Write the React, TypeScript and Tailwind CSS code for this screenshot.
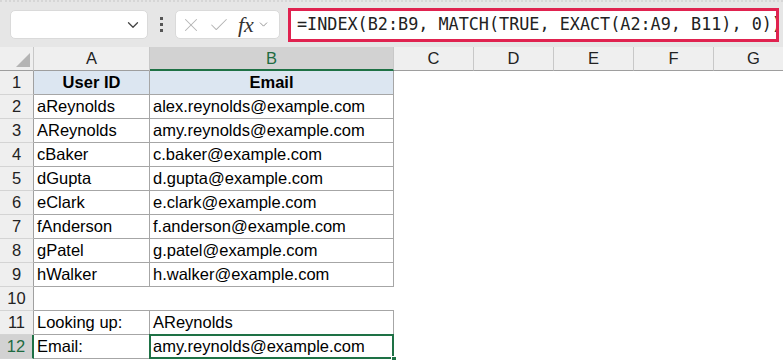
import { X, Check, ChevronDown } from "lucide-react";

const rows: [string, string][] = [
  ["aReynolds", "alex.reynolds@example.com"],
  ["AReynolds", "amy.reynolds@example.com"],
  ["cBaker", "c.baker@example.com"],
  ["dGupta", "d.gupta@example.com"],
  ["eClark", "e.clark@example.com"],
  ["fAnderson", "f.anderson@example.com"],
  ["gPatel", "g.patel@example.com"],
  ["hWalker", "h.walker@example.com"],
];

function RowNum({ n, active }: { n: number; active?: boolean }) {
  return (
    <div
      className={
        active
          ? "w-[34px] h-[24px] shrink-0 flex items-center justify-center bg-[#d2d2d2] text-[#1e6b41] border-b border-[#d4d4d4] border-r-2 border-r-[#1e7145]"
          : "w-[34px] h-[24px] shrink-0 flex items-center justify-center bg-[#efefef] text-[#222] border-b border-[#d4d4d4] border-r border-r-[#a0a0a0]"
      }
    >
      {n}
    </div>
  );
}

export default function App() {
  return (
    <div
      className="w-[783px] h-[360px] overflow-hidden bg-white text-[16.5px] text-black"
      style={{ fontFamily: "'Liberation Sans', Arial, sans-serif" }}
    >
      {/* Formula bar */}
      <div className="h-[47px] bg-[#e6e6e6] border-t-2 border-dotted border-[#d6d6d6] flex items-center">
        <div className="ml-[10px] w-[138px] h-[29px] bg-white rounded-[5px] border border-[#dadada] flex items-center justify-end pr-[5px]">
          <ChevronDown className="w-[18px] h-[18px] text-[#444]" strokeWidth={1.7} />
        </div>
        <div className="w-[27px] flex flex-col items-center gap-[3px]">
          <span className="w-[3px] h-[3px] bg-[#555]" />
          <span className="w-[3px] h-[3px] bg-[#555]" />
          <span className="w-[3px] h-[3px] bg-[#555]" />
        </div>
        <div className="w-[105px] h-[29px] bg-white rounded-[5px] border border-[#dadada] flex items-center pl-[4px]">
          <X className="w-[22px] h-[22px] text-[#b4b4b4]" strokeWidth={1.1} />
          <Check className="w-[22px] h-[22px] ml-[6px] text-[#b4b4b4]" strokeWidth={1.1} />
          <span
            className="ml-[8px] italic text-[22px] text-[#333] leading-none"
            style={{ fontFamily: "'Liberation Serif', 'Times New Roman', serif" }}
          >
            fx
          </span>
          <ChevronDown className="w-[13px] h-[13px] ml-[3px] text-[#888]" strokeWidth={1.6} />
        </div>
        <div className="ml-[8px] w-[491px] h-[34px] border-[3px] border-[#e0224f] bg-white flex items-center pl-[6px] overflow-hidden whitespace-nowrap">
          <span
            className="text-[16.8px] text-[#222]"
            style={{ fontFamily: "'DejaVu Sans Mono', 'Liberation Mono', monospace" }}
          >
            =INDEX(B2:B9, MATCH(TRUE, EXACT(A2:A9, B11), 0))
          </span>
        </div>
      </div>

      {/* Column headers */}
      <div className="flex h-[24px] bg-[#efefef]">
        <div className="w-[34px] shrink-0 border-b border-[#9e9e9e] border-r border-r-[#c8c8c8] relative">
          <div
            className="absolute right-[3px] bottom-[3px] w-[14px] h-[14px] bg-[#b4b4b4]"
            style={{ clipPath: "polygon(100% 0, 100% 100%, 0 100%)" }}
          />
        </div>
        <div className="w-[116px] shrink-0 flex items-center justify-center border-b border-[#9e9e9e] border-r border-r-[#c8c8c8] text-[#222]">
          A
        </div>
        <div className="w-[244px] shrink-0 flex items-center justify-center bg-[#d2d2d2] border-b-2 border-[#1e7145] border-r border-r-[#c8c8c8] text-[#1e6b41]">
          B
        </div>
        {["C", "D", "E", "F", "G"].map((c) => (
          <div
            key={c}
            className="w-[80px] shrink-0 flex items-center justify-center border-b border-[#9e9e9e] border-r border-r-[#c8c8c8] text-[#222]"
          >
            {c}
          </div>
        ))}
      </div>

      {/* Row 1 */}
      <div className="flex h-[24px]">
        <RowNum n={1} />
        <div className="w-[116px] shrink-0 flex items-center justify-center bg-[#dce6f1] font-bold border-b border-r border-[#a6a6a6]">
          User ID
        </div>
        <div className="w-[244px] shrink-0 flex items-center justify-center bg-[#dce6f1] font-bold border-b border-r border-[#a6a6a6]">
          Email
        </div>
      </div>

      {rows.map(([id, email], i) => (
        <div key={id} className="flex h-[24px]">
          <RowNum n={i + 2} />
          <div className="w-[116px] shrink-0 flex items-center pl-[3px] border-b border-r border-[#a6a6a6]">
            {id}
          </div>
          <div className="w-[244px] shrink-0 flex items-center pl-[3px] border-b border-r border-[#a6a6a6]">
            {email}
          </div>
        </div>
      ))}

      {/* Row 10 */}
      <div className="flex h-[24px]">
        <RowNum n={10} />
        <div className="w-[360px] shrink-0 border-b border-[#a6a6a6]" />
      </div>

      {/* Row 11 */}
      <div className="flex h-[24px]">
        <RowNum n={11} />
        <div className="w-[116px] shrink-0 flex items-center pl-[3px] border-b border-r border-[#a6a6a6]">
          Looking up:
        </div>
        <div className="w-[244px] shrink-0 flex items-center pl-[3px] border-b border-r border-[#a6a6a6]">
          AReynolds
        </div>
      </div>

      {/* Row 12 */}
      <div className="flex h-[24px]">
        <RowNum n={12} active />
        <div className="w-[116px] shrink-0 flex items-center pl-[3px] border-b border-r border-[#a6a6a6]">
          Email:
        </div>
        <div className="w-[244px] shrink-0 flex items-center pl-[3px] border-b border-r border-[#a6a6a6] relative">
          amy.reynolds@example.com
          <div className="absolute -left-[1px] -top-[1px] -right-[1px] -bottom-[1px] border-2 border-[#1e7145]" />
          <div className="absolute -right-[4px] -bottom-[4px] w-[6px] h-[6px] bg-[#1e7145] border border-white" />
        </div>
      </div>
    </div>
  );
}
